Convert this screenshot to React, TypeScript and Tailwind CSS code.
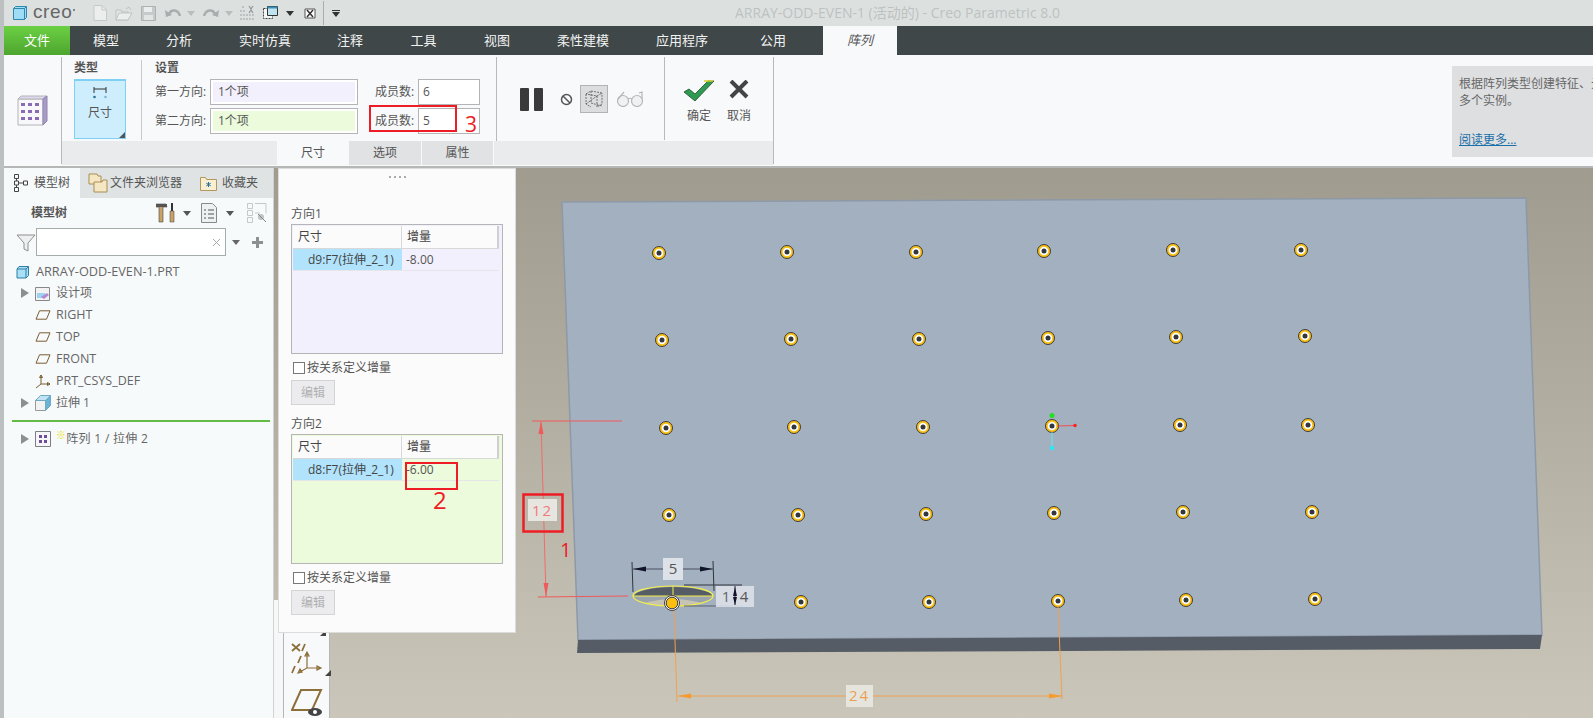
import React from "react";

const FONT = { fontFamily: '"Open Sans","Noto Sans CJK SC",sans-serif' };

const tabs: [string, string][] = [
  ["模型", "w-[72px]"],
  ["分析", "w-[74px]"],
  ["实时仿真", "w-[98px]"],
  ["注释", "w-[72px]"],
  ["工具", "w-[75px]"],
  ["视图", "w-[72px]"],
  ["柔性建模", "w-[100px]"],
  ["应用程序", "w-[98px]"],
  ["公用", "w-[84px]"],
];

const holes: [number, number][] = [
  [659, 253], [787, 252], [916, 252], [1044, 251], [1173, 250], [1301, 250],
  [662, 340], [791, 339], [919, 339], [1048, 338], [1176, 337], [1305, 336],
  [666, 428], [794, 427], [923, 427], [1052, 426], [1180, 425], [1308, 425],
  [669, 515], [798, 515], [926, 514], [1054, 513], [1183, 512], [1312, 512],
  [801, 602], [929, 602], [1058, 601], [1186, 600], [1315, 599],
];

function Caret({ className = "" }: { className?: string }) {
  return (
    <svg width="8" height="5" viewBox="0 0 8 5" className={className}>
      <path d="M0 0h8L4 5z" fill="currentColor" />
    </svg>
  );
}

function Chevron() {
  return (
    <svg width="8" height="10" viewBox="0 0 8 10" className="shrink-0">
      <path d="M0 0l8 5-8 5z" fill="#8a8f92" />
    </svg>
  );
}

function Plane() {
  return (
    <svg width="16" height="10" viewBox="0 0 16 10">
      <path d="M4.5 .8h10.5L11.5 9.2H1z" fill="none" stroke="#7a5c34" strokeWidth="1" />
    </svg>
  );
}

function Cube() {
  return (
    <svg width="14" height="14" viewBox="0 0 14 14">
      <path d="M3 1.5h9.5v9L10 13H1V4z" fill="#a8e0f7" stroke="#2f7ea3" strokeWidth="1" />
      <path d="M1 4h9v9M10 4l2.5-2.5" fill="none" stroke="#2f7ea3" strokeWidth="1" />
    </svg>
  );
}

function TreeRow({ icon, label, arrow, size = "text-[12px]" }: { icon: React.ReactNode; label: React.ReactNode; arrow?: boolean; size?: string }) {
  return (
    <div className="flex items-center h-[22px] pl-[17px]">
      <div className="w-[8px] shrink-0">{arrow && <Chevron />}</div>
      <div className="w-[25px] flex justify-center shrink-0 pl-[2px]">{icon}</div>
      <div className={`pl-[2px] ${size} text-[#666] whitespace-nowrap`}>{label}</div>
    </div>
  );
}

function Field({ label, fill, value }: { label: string; fill: string; value: string }) {
  return (
    <div className="flex items-center h-[26px]">
      <div className="w-[55px] text-[12px] text-[#555] whitespace-nowrap">{label}</div>
      <div className="w-[148px] h-[26px] border border-[#b4b4b4] bg-white p-[2px]">
        <div className={`h-full ${fill} text-[12px] text-[#555] pl-[5px] leading-[20px]`}>{value}</div>
      </div>
      <div className="w-[60px] pl-[17px] text-[12px] text-[#555] whitespace-nowrap">成员数:</div>
    </div>
  );
}

function DirTable({ title, dim, value, fill }: { title: string; dim: string; value: string; fill: string }) {
  return (
    <div className="flex flex-col">
      <div className="text-[12px] text-[#555] h-[18px] leading-[16px]">{title}</div>
      <div className={`w-[212px] h-[130px] border border-[#b5b5b5] ${fill} p-[1px] relative`}>
        <div className="flex h-[23px] bg-[#fbfbfb] border-b border-[#d8d8d8] mr-[2px] text-[12px] text-[#444] leading-[22px]">
          <div className="w-[109px] pl-[5px] border-r border-[#d8d8d8]">尺寸</div>
          <div className="pl-[5px]">增量</div>
          <div className="ml-auto w-[2px] bg-[#cfcfcf]" />
        </div>
        <div className="flex h-[22px] border-b border-[#e6e6ea] mr-[2px] text-[12px] leading-[22px]">
          <div className="w-[109px] bg-[#b1e3fc] pl-[15px] text-[#444] whitespace-nowrap">{dim}</div>
          <div className="pl-[4px] text-[#555]">{value}</div>
        </div>
      </div>
      <div className="flex items-center h-[26px] pl-[2px] pt-[1px]">
        <div className="w-[12px] h-[12px] border border-[#777] bg-white" />
        <span className="pl-[2px] text-[12px] text-[#555]">按关系定义增量</span>
      </div>
      <div className="w-[44px] h-[25px] bg-[#ececee] border border-[#d4d4d4] text-[12px] text-[#b0b0b0] text-center leading-[23px]">编辑</div>
    </div>
  );
}

function ArrayIcon({ big }: { big?: boolean }) {
  if (big) {
    return (
      <svg width="31" height="31" viewBox="0 0 31 31">
        <path d="M1 4h25v26H1z" fill="#f8f8fa" stroke="#b4b4b8" />
        <path d="M1 4l3-3h26l-4 3z" fill="#ddd8ec" stroke="#b4b4b8" />
        <path d="M26 4l4-3v25l-4 4z" fill="#a99cc9" stroke="#8f83b0" />
        {[5, 12, 19].map((y) =>
          [4, 11, 18].map((x) => <rect key={`${x}-${y}`} x={x} y={y + 3} width="4" height="3" fill="#8a6cb4" />)
        )}
      </svg>
    );
  }
  return (
    <svg width="16" height="16" viewBox="0 0 16 16">
      <path d="M.5 .5h15v15H.5z" fill="#f6f6f8" stroke="#7d7d84" />
      {[4, 9].map((y) => [4, 9].map((x) => <rect key={`${x}-${y}`} x={x} y={y} width="3" height="3" fill="#6e4d98" />))}
    </svg>
  );
}

function TitleIcons() {
  return (
    <div className="flex items-center h-full">
      <svg width="14" height="16" viewBox="0 0 14 16" className="ml-[89px]"><path d="M1 .5h8l4.5 4.5v10.500H1z" fill="#eceeee" stroke="#c5c9c9" /><path d="M9 .5V5h4.500" fill="none" stroke="#c5c9c9" /></svg>
      <svg width="18" height="15" viewBox="0 0 18 15" className="ml-[8px]"><path d="M1 4h5l1 2h6v8H1z" fill="#e4e6e5" stroke="#bfc3c3" /><path d="M1 14l3-7h13l-4 7z" fill="#eceeee" stroke="#bfc3c3" /><path d="M11 3l3-2 2 3" fill="none" stroke="#bfc3c3" /></svg>
      <svg width="15" height="15" viewBox="0 0 15 15" className="ml-[8px]"><path d="M.5 .5h14v14H.5z" fill="#c6caca" stroke="#aeb2b2" /><path d="M3 1h8v5H3z" fill="#eceeee" /><path d="M3 9h9v5H3z" fill="#e3e5e5" /></svg>
      <svg width="16" height="12" viewBox="0 0 16 12" className="ml-[9px]"><path d="M4 7c2-5 9-5 11 2" fill="none" stroke="#a8acac" strokeWidth="2.500" /><path d="M0 3l1 7 6-2z" fill="#a8acac" /></svg>
      <Caret className="ml-[6px] text-[#b9bdbd]" />
      <svg width="16" height="12" viewBox="0 0 16 12" className="ml-[8px]"><path d="M12 7C10 2 3 2 1 9" fill="none" stroke="#a8acac" strokeWidth="2.500" /><path d="M16 3l-1 7-6-2z" fill="#a8acac" /></svg>
      <Caret className="ml-[6px] text-[#b9bdbd]" />
      <svg width="16" height="16" viewBox="0 0 16 16" className="ml-[7px]"><path d="M0 6h5M0 10h14M0 14h14M2 2h3" stroke="#b3b7b7" strokeWidth="1.500" strokeDasharray="2 1" /><path d="M9 1l2 3 2-3M9 8l2-3 2 3" fill="none" stroke="#8f9494" strokeWidth="1.200" /></svg>
      <svg width="15" height="16" viewBox="0 0 15 16" className="ml-[7px]"><path d="M.5 3.500h9v10h-9z" fill="#f4f6f6" stroke="#444" strokeDasharray="2 1" /><path d="M4.500 1.500h10v9h-10z" fill="#bfe3ef" stroke="#333" /><path d="M4.500 1.500h10v2h-10z" fill="#3d8fb5" /></svg>
      <Caret className="ml-[8px] text-[#333]" />
      <svg width="12" height="11" viewBox="0 0 12 11" className="ml-[10px]"><path d="M1 1h10v9H1z" fill="#fff" stroke="#555" /><path d="M3 2l6 7M9 2L3 9" stroke="#333" strokeWidth="1.500" /></svg>
      <div className="ml-[7px] w-[1px] h-[24px] bg-[#a9aeae]" />
      <div className="ml-[8px] flex flex-col items-center">
        <div className="w-[8px] h-[1px] bg-[#333] mb-[1px]" />
        <Caret className="text-[#333]" />
      </div>
    </div>
  );
}

function Viewport() {
  const selX = 673;
  return (
    <svg className="absolute inset-0 w-full h-full" viewBox="274 168 1319 550" style={FONT}>
      <polygon points="562,202 1526,198 1542,635 578,640" fill="#a3b0c0" stroke="#8e99a8" strokeWidth="1.500" />
      <polygon points="578,640 1542,635 1540,649 577,653" fill="#555c66" />
      {holes.map(([x, y]) => (
        <g key={`${x}-${y}`}>
          <circle cx={x} cy={y} r="6.500" fill="#fbbf0f" stroke="#3d3d3d" strokeWidth="1" />
          <circle cx={x} cy={y} r="4.300" fill="#fff" />
          <circle cx={x} cy={y} r="2.500" fill="#33373c" />
        </g>
      ))}
      {/* gizmo */}
      <line x1="1057" y1="426" x2="1075" y2="425.500" stroke="#f05050" />
      <circle cx="1075" cy="425.500" r="1.800" fill="#ff2020" />
      <line x1="1052" y1="432" x2="1052" y2="448" stroke="#66e4ee" />
      <circle cx="1052" cy="448" r="2.200" fill="#2ae8f5" />
      <circle cx="1052" cy="415.500" r="2.500" fill="#22e022" />
      {/* red dims */}
      <line x1="532" y1="421" x2="622" y2="421" stroke="#f05a5a" />
      <line x1="538" y1="597" x2="628" y2="596" stroke="#f05a5a" />
      <line x1="541" y1="421" x2="546" y2="597" stroke="#f26a6a" />
      <polygon points="541,421 538.500,434 543.500,434" fill="#f05a5a" />
      <polygon points="546,597 543.500,583 548.500,583" fill="#f05a5a" />
      <rect x="528" y="499" width="29" height="22" fill="#e6e5e0" />
      <text x="542.500" y="516" textAnchor="middle" fontSize="15" fill="#f07a7a" letterSpacing="2">12</text>
      <rect x="523.500" y="494.500" width="39" height="37" fill="none" stroke="#ee1c25" strokeWidth="2.500" />
      <text x="560" y="557" fontSize="20" fill="#ee1c25">1</text>
      {/* selected hole */}
      <ellipse cx={selX} cy="596" rx="40" ry="10" fill="#9aa3ae" />
      <path d="M633.500 596a40 10 0 0 1 79.500 0z" fill="#555c66" />
      <path d="M645 603q28-8 56 0q-28 6-56 0z" fill="#c7c4b6" />
      <ellipse cx={selX} cy="596" rx="40" ry="10" fill="none" stroke="#f3f04a" strokeWidth="1.200" />
      <line x1="633" y1="596" x2="713" y2="596" stroke="#f3f04a" />
      <line x1="673" y1="586" x2="673" y2="596" stroke="#f3f04a" />
      <circle cx="672" cy="603" r="7.500" fill="#fff" stroke="#3d3d3d" />
      <circle cx="672" cy="603" r="5.800" fill="#fbbf0f" stroke="#3d3d3d" />
      {/* dim 5 */}
      <line x1="632" y1="562" x2="633" y2="592" stroke="#30343c" />
      <line x1="713" y1="561" x2="714" y2="591" stroke="#30343c" />
      <line x1="633" y1="569" x2="713" y2="569" stroke="#4a5060" />
      <polygon points="633,569 646,566.500 646,571.500" fill="#10142a" />
      <polygon points="713,569 700,566.500 700,571.500" fill="#10142a" />
      <rect x="663" y="558" width="20" height="22" fill="#dde1e8" />
      <text x="673" y="574" textAnchor="middle" fontSize="15" fill="#555">5</text>
      {/* dim 4 */}
      <line x1="684" y1="585" x2="742" y2="585" stroke="#30343c" />
      <line x1="684" y1="606" x2="743" y2="606" stroke="#5a606c" />
      <rect x="716" y="586" width="38" height="21" fill="#dde1e8" fillOpacity=".9" />
      <text x="726" y="602" textAnchor="middle" fontSize="15" fill="#666">1</text>
      <text x="744" y="602" textAnchor="middle" fontSize="15" fill="#555">4</text>
      <line x1="735" y1="586" x2="735" y2="605" stroke="#20243a" />
      <polygon points="735,587 733,596 737,596" fill="#10142a" />
      <polygon points="735,605 733,597 737,597" fill="#10142a" />
      {/* orange dims */}
      <line x1="674" y1="611" x2="677" y2="702" stroke="#f2a04e" />
      <line x1="1058" y1="606" x2="1062" y2="699" stroke="#f2a04e" />
      <line x1="678" y1="696" x2="1062" y2="696" stroke="#f2a04e" />
      <polygon points="678,696 691,693.500 691,698.500" fill="#f59a2c" />
      <polygon points="1062,696 1049,693.500 1049,698.500" fill="#f59a2c" />
      <rect x="846" y="685" width="27" height="22" fill="#e6e5dd" />
      <text x="859.500" y="701" textAnchor="middle" fontSize="15" fill="#e8a058" letterSpacing="2">24</text>
    </svg>
  );
}

export default function App() {
  return (
    <div className="relative w-[1593px] h-[718px] overflow-hidden flex bg-[#bcc0c1]" style={FONT}>
      <div className="w-[4px] shrink-0" />
      <div className="flex-1 flex flex-col min-w-0">
        {/* Title bar */}
        <div className="h-[26px] bg-[#dce1e0] flex items-center relative shrink-0">
          <svg width="14" height="14" viewBox="0 0 14 14" className="absolute left-[9px] top-[6px]">
            <path d="M2.500 .5h11v11L11.500 13.500H.5V2.500z" fill="#9fdcf5" stroke="#2f88b0" />
            <path d="M.5 2.500h11v11M11.500 2.500l2-2" fill="none" stroke="#2f88b0" />
          </svg>
          <span className="absolute left-[29px] top-[1px] text-[19px] leading-[22px] text-[#666] tracking-[0.6px]" style={{ fontFamily: '"Liberation Sans",sans-serif' }}>creo</span>
          <span className="absolute left-[69px] top-[9px] w-[2px] h-[2px] rounded-full bg-[#666]" />
          <TitleIcons />
          <span className="absolute left-[731px] top-[3px] text-[14px] leading-[20px] text-[#bcc1c1] whitespace-nowrap">ARRAY-ODD-EVEN-1 (活动的) - Creo Parametric 8.0</span>
        </div>

        {/* Tab bar */}
        <div className="h-[29px] bg-[#3f4748] flex text-[13px] text-[#f2f2f2] shrink-0">
          <div className="w-[66px] bg-linear-to-b from-[#6bd043] to-[#4ea52f] text-center leading-[29px] text-white">文件</div>
          {tabs.map(([t, w]) => (
            <div key={t} className={`${w} text-center leading-[29px]`}>{t}</div>
          ))}
          <div className="w-[8px]" />
          <div className="w-[74px] bg-[#f8f9fb] text-[#555] italic text-center leading-[29px]">阵列</div>
        </div>

        {/* Ribbon */}
        <div className="h-[113px] bg-[#f8f9fb] border-b-2 border-[#b5b7b7] flex shrink-0">
          <div className="w-[57px] flex items-center justify-center pr-[1px] pb-[1px]"><ArrayIcon big /></div>
          <div className="w-[713px] flex flex-col border-x border-[#b7b9ba] mt-[2px] mb-[2px]">
            <div className="h-[86px] flex">
              <div className="w-[79px] pl-[12px] pt-[1px]">
                <div className="text-[12px] font-bold text-[#555] h-[21px] leading-[19px]">类型</div>
                <div className="relative w-[52px] h-[60px] bg-[#cfeefd] border border-[#7fd0f5] border-t-2 flex flex-col items-center pt-[5px]">
                  <svg width="14" height="13" viewBox="0 0 14 13">
                    <path d="M1 1v6M13 1v6M1 3h12" stroke="#333" fill="none" />
                    <circle cx="1.500" cy="11" r="1.300" fill="#2a6f95" />
                    <circle cx="12.500" cy="11" r="1.300" fill="#7db6d2" />
                  </svg>
                  <div className="text-[12px] text-[#555] mt-[5px]">尺寸</div>
                  <div className="absolute right-0 bottom-0 w-0 h-0 border-l-[6px] border-l-transparent border-b-[6px] border-b-[#555]" />
                </div>
              </div>
              <div className="w-[1px] h-[80px] bg-[#c8c9ca] mt-[3px]" />
              <div className="w-[354px] pl-[13px] pt-[1px]">
                <div className="text-[12px] font-bold text-[#555] h-[21px] leading-[19px]">设置</div>
                <div className="flex">
                  <div className="flex flex-col gap-[3px]">
                    <Field label="第一方向:" fill="bg-[#f3f0fd]" value="1个项" />
                    <Field label="第二方向:" fill="bg-[#ebfbdc]" value="1个项" />
                  </div>
                  <div className="flex flex-col gap-[3px]">
                    <div className="w-[62px] h-[26px] border border-[#b4b4b4] bg-white text-[12px] text-[#555] pl-[4px] leading-[24px]">6</div>
                    <div className="w-[62px] h-[26px] border border-[#b4b4b4] bg-white text-[12px] text-[#555] pl-[4px] leading-[24px]">5</div>
                  </div>
                </div>
              </div>
              <div className="w-[1px] h-[84px] bg-[#b7b9ba]" />
              <div className="w-[167px] flex items-center pl-[23px]">
                <svg width="23" height="23" viewBox="0 0 23 23"><rect width="9" height="23" rx="1" fill="#3a3a3a" /><rect x="14" width="9" height="23" rx="1" fill="#3a3a3a" /></svg>
                <svg width="13" height="13" viewBox="0 0 13 13" className="ml-[17px]"><circle cx="6.500" cy="6.500" r="5" fill="none" stroke="#555" strokeWidth="1.500" /><line x1="3" y1="3" x2="10" y2="10" stroke="#555" strokeWidth="1.500" /></svg>
                <div className="ml-[7px] w-[28px] h-[28px] bg-[#dcdddf] border border-[#b2b3b5] flex items-center justify-center">
                  <svg width="20" height="20" viewBox="0 0 20 20"><path d="M2 5l5-3 11 2-5 3zM2 5v10l5 3M13 7v11l5-3V4M7 2v12l11 3M2 15l11-8" fill="none" stroke="#555" strokeWidth=".8" strokeDasharray="2 1" /></svg>
                </div>
                <svg width="28" height="16" viewBox="0 0 28 16" className="ml-[8px]"><circle cx="7" cy="10" r="5.500" fill="#f0f1f2" stroke="#b4b6b8" strokeWidth="1.200" /><circle cx="21" cy="10" r="5.500" fill="#f0f1f2" stroke="#b4b6b8" strokeWidth="1.200" /><path d="M12 8q2-1.500 4 0M2 8l6-7M26 8V1l-3 1" fill="none" stroke="#b4b6b8" strokeWidth="1.200" /></svg>
              </div>
              <div className="w-[1px] h-[83px] bg-[#b7b9ba]" />
              <div className="flex-1 flex pl-[19px] pt-[23px]">
                <div className="w-[30px] flex flex-col items-center">
                  <svg width="30" height="21" viewBox="0 0 30 21"><path d="M0 12l5-3 6 5L24 1h6L11 21z" fill="#2f9a52" stroke="#234a2c" strokeWidth=".8" /><path d="M20 1h9" stroke="#d9d02a" strokeWidth="1.500" /></svg>
                  <div className="text-[12px] text-[#555] mt-[6px] whitespace-nowrap">确定</div>
                </div>
                <div className="w-[30px] ml-[10px] flex flex-col items-center">
                  <svg width="20" height="21" viewBox="0 0 20 21"><path d="M2 1l16 16M18 1L2 17" stroke="#444" strokeWidth="4" /></svg>
                  <div className="text-[12px] text-[#555] mt-[6px] whitespace-nowrap">取消</div>
                </div>
              </div>
            </div>
            <div className="h-[24px] bg-[#e9ebec] flex text-[12px] text-[#555] leading-[24px]">
              <div className="w-[215px]" />
              <div className="w-[72px] bg-[#f8f9fb] text-center">尺寸</div>
              <div className="w-[72px] bg-[#e0e2e3] text-center">选项</div>
              <div className="w-[1px] bg-[#f8f9fb]" />
              <div className="w-[71px] bg-[#e0e2e3] text-center">属性</div>
              <div className="w-[1px] bg-[#f8f9fb]" />
            </div>
          </div>
          <div className="flex-1 flex justify-end pt-[11px]">
            <div className="w-[141px] h-[91px] bg-[#dedfe1] pl-[7px] pt-[9px] overflow-hidden">
              <div className="text-[12px] text-[#666] leading-[17px] whitespace-nowrap">根据阵列类型创建特征、元素</div>
              <div className="text-[12px] text-[#666] leading-[17px]">多个实例。</div>
              <div className="text-[12px] text-[#1a6fa8] underline leading-[17px] mt-[22px]">阅读更多...</div>
            </div>
          </div>
        </div>

        {/* Main */}
        <div className="flex-1 flex min-h-0">
          {/* Left panel */}
          <div className="w-[270px] shrink-0 bg-[#f7fafb] border-r border-[#cfd3d3] flex flex-col">
            <div className="h-[30px] bg-[#dfe3e3] flex text-[12px] text-[#555] shrink-0">
              <div className="w-[76px] bg-[#f7fafb] flex items-center pl-[10px] gap-[6px]">
                <svg width="14" height="18" viewBox="0 0 14 18"><path d="M.5 .5h4v4h-4zM.5 7h4v4h-4zM9.500 7h4v4h-4zM.5 13.500h4v4h-4zM4.500 9h5M2.500 4.500V7M2.500 11v2.500" fill="none" stroke="#444" /></svg>
                模型树
              </div>
              <div className="flex items-center pl-[8px] gap-[2px] w-[112px]">
                <svg width="20" height="20" viewBox="0 0 20 20"><path d="M1 1h8l1 2h3v8H1z" fill="#f6e7c4" stroke="#a98e55" /><path d="M6 9h8l1-2h4v12H6z" fill="#f6e7c4" stroke="#a98e55" /></svg>
                <span className="whitespace-nowrap">文件夹浏览器</span>
              </div>
              <div className="flex items-center pl-[8px] gap-[5px]">
                <svg width="17" height="15" viewBox="0 0 17 15"><path d="M.5 1.500h5l1 2h10v11H.5z" fill="#f9efd2" stroke="#b4975a" /><path d="M8.500 6v5M6.300 7.200l4.400 2.600M10.700 7.200l-4.400 2.600" stroke="#2a6f95" /></svg>
                收藏夹
              </div>
            </div>
            <div className="flex items-center h-[30px] pl-[27px] shrink-0">
              <span className="text-[12px] font-bold text-[#555]">模型树</span>
              <svg width="20" height="20" viewBox="0 0 20 20" className="ml-[89px]"><path d="M0 1h10l1 3H7v15H3V4H0z" fill="#c9a266" stroke="#444" strokeWidth=".6" /><path d="M0 1h11v3H0z" fill="#555" /><path d="M15 0h2v8h-2z" fill="#333" /><path d="M14 8h4v11h-4z" fill="#c9a266" stroke="#555" strokeWidth=".6" /></svg>
              <Caret className="ml-[7px] text-[#555]" />
              <svg width="16" height="20" viewBox="0 0 16 20" className="ml-[10px]"><path d="M.5 .5h11l4 4v15H.5z" fill="#eef1f2" stroke="#888" /><path d="M3 7h2M7 7h6M3 11h2M7 11h6M3 15h2M7 15h6" stroke="#555" /></svg>
              <Caret className="ml-[9px] text-[#555]" />
              <svg width="20" height="20" viewBox="0 0 20 20" className="ml-[13px]"><path d="M.5 .5h5v5h-5zM.5 7.500h5v5h-5zM.5 14.500h5v5h-5zM8 .5h11v10M8 10h5" fill="none" stroke="#c5c9c9" /><circle cx="14" cy="14" r="3" fill="#bfc3c3" /><path d="M11 11l8 8" stroke="#888" /></svg>
            </div>
            <div className="flex items-center h-[28px] pl-[12px] shrink-0">
              <svg width="20" height="20" viewBox="0 0 20 20"><path d="M1 3h18l-7 8v8l-4-2v-6z" fill="#eef0f0" stroke="#8c8f90" /></svg>
              <div className="w-[190px] h-[28px] bg-white border border-[#a6abab] flex items-center justify-end pr-[4px]">
                <svg width="9" height="9" viewBox="0 0 9 9"><path d="M1 1l7 7M8 1l-7 7" stroke="#a8a8a8" /></svg>
              </div>
              <Caret className="ml-[6px] text-[#666]" />
              <svg width="11" height="11" viewBox="0 0 11 11" className="ml-[12px]"><path d="M4 0h3v4h4v3H7v4H4V7H0V4h4z" fill="#8c9090" /></svg>
            </div>
            <div className="pt-[5px]">
              <div className="flex items-center h-[21px] pl-[12px]">
                <div className="w-[20px]"><Cube /></div>
                <span className="text-[12.7px] text-[#666] whitespace-nowrap">ARRAY-ODD-EVEN-1.PRT</span>
              </div>
              <TreeRow arrow label="设计项" icon={<svg width="15" height="16" viewBox="0 0 15 16"><path d="M.5 2.500h14v13H.5z" fill="#f2f2f2" stroke="#888" /><path d="M2 8h8v5H2z" fill="#9cd3ee" /><path d="M6 12l6-4 2 2-5 4z" fill="#b08ad0" /></svg>} />
              <TreeRow size="text-[12.5px]" label="RIGHT" icon={<Plane />} />
              <TreeRow size="text-[12.5px]" label="TOP" icon={<Plane />} />
              <TreeRow size="text-[12.5px]" label="FRONT" icon={<Plane />} />
              <TreeRow size="text-[12.5px]" label="PRT_CSYS_DEF" icon={<svg width="16" height="15" viewBox="0 0 16 15"><path d="M6 1v9L1 14M6 10h9M6 1L4.500 3.500h3zM15 10l-2.500-1.500v3z" fill="none" stroke="#7a5c34" /></svg>} />
              <TreeRow arrow label="拉伸 1" icon={<svg width="16" height="16" viewBox="0 0 16 16"><path d="M.5 5.500h10v10H.5z" fill="#f2f2f2" stroke="#999" /><path d="M.5 5.500l5-5h10l-5 5z" fill="#bfe3f2" stroke="#6fa9c2" /><path d="M10.500 5.500l5-5v10l-5 5z" fill="#68b3d6" stroke="#6fa9c2" /></svg>} />
              <div className="h-[2px] bg-[#62bb46] ml-[8px] mr-[3px] mt-[6px] mb-[6px]" />
              <TreeRow arrow label={<span className="tracking-[0.3px]"><span className="text-[#e6e000] font-bold align-top text-[10px] leading-[10px]">※</span>阵列 1 / 拉伸 2</span>} icon={<ArrayIcon />} />
            </div>
          </div>

          {/* Viewport */}
          <div className="flex-1 relative min-w-0 bg-linear-to-b from-[#9f9c8f] to-[#cac7ba]">
            <Viewport />
          </div>
        </div>
      </div>

      {/* White gap + shape toolbar */}
      <div className="absolute left-[274px] top-[600px] bottom-0 w-[9px] bg-[#f6f8f8]" />
      <div className="absolute left-[283px] top-[600px] bottom-0 w-[47px] bg-[#f8f9fb] border-x border-[#b5b7b7] flex flex-col items-center">
        <div className="absolute right-[3px] top-[30px] w-0 h-0 border-l-[6px] border-l-transparent border-b-[6px] border-b-[#444]" />
        <div className="relative mt-[41px]">
          <svg width="34" height="34" viewBox="0 0 34 34"><path d="M2 3l8 7M10 3l-8 7M15 3l-3 7M11 15l-3 7M5 25l-3 7" stroke="#8d6f3a" strokeWidth="1.800" fill="none" /><path d="M17 11v16L8 32M17 27h14M17 11l-2 4h4zM31 27l-4-2v4zM8 32l4-1-2-3z" stroke="#8d6f3a" strokeWidth="1.200" fill="none" /></svg>
          <div className="absolute right-[-7px] bottom-[-1px] w-0 h-0 border-l-[6px] border-l-transparent border-b-[6px] border-b-[#444]" />
        </div>
        <div className="mt-[13px] relative">
          <svg width="32" height="32" viewBox="0 0 32 32"><path d="M10 2h20l-9 20H1z" fill="none" stroke="#8d6f3a" strokeWidth="2" /><ellipse cx="24" cy="24" rx="7" ry="4" fill="#444" /><circle cx="24" cy="24" r="2" fill="#fff" /></svg>
        </div>
      </div>

      {/* Dashboard popup */}
      <div className="absolute left-[278px] top-[168px] w-[238px] h-[465px] bg-[#fbfbfb] border border-[#dcdcdc] pl-[12px] flex flex-col">
        <div className="h-[15px] flex justify-center items-center gap-[3px] pr-[12px]">
          {[0, 1, 2, 3].map((i) => <div key={i} className="w-[2px] h-[2px] bg-[#aaa]" />)}
        </div>
        <div className="pt-[22px]">
          <DirTable title="方向1" dim="d9:F7(拉伸_2_1)" value="-8.00" fill="bg-[#f3f0fd]" />
        </div>
        <div className="pt-[11px]">
          <DirTable title="方向2" dim="d8:F7(拉伸_2_1)" value="-6.00" fill="bg-[#ebfbdc]" />
        </div>
      </div>

      {/* Red annotations over the interface */}
      <div className="absolute left-[405px] top-[462px] w-[53px] h-[28px] border-2 border-[#ee1c25]" />
      <div className="absolute left-[433px] top-[486px] text-[24px] leading-[28px] text-[#ee1c25]">2</div>
      <div className="absolute left-[369px] top-[105px] w-[88px] h-[27px] border-2 border-[#ee1c25]" />
      <div className="absolute left-[465px] top-[110px] text-[21px] leading-[28px] text-[#ee1c25]">3</div>
    </div>
  );
}
